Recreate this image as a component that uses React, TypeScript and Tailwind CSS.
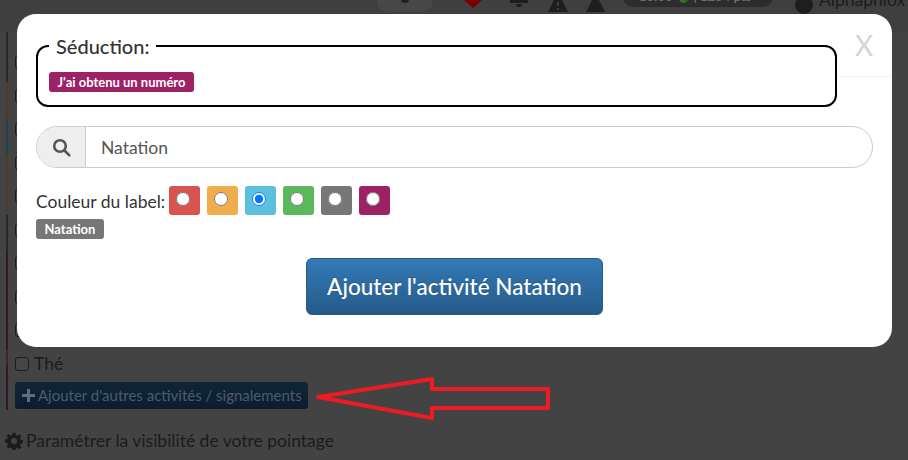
const swatches = [
  { bg: "bg-[#d9534f]", on: false },
  { bg: "bg-[#f0ad4e]", on: false },
  { bg: "bg-[#5bc0de]", on: true },
  { bg: "bg-[#5cb85c]", on: false },
  { bg: "bg-[#777777]", on: false },
  { bg: "bg-[#9c2265]", on: false },
];

const stripes = [
  { h: "h-[50px]", c: "bg-[#262b29]" },
  { h: "h-[36px]", c: "bg-[#4d3d27]" },
  { h: "h-[37px]", c: "bg-[#23424d]" },
  { h: "h-[60px]", c: "bg-[#4d3d27]" },
  { h: "h-[35px]", c: "bg-[#262b29]" },
  { h: "h-[100px]", c: "bg-[#30192a]" },
  { h: "h-[15px]", c: "bg-[#4a2228]" },
  { h: "h-[45px]", c: "bg-[#30192a]" },
];

function Box() {
  return <span className="block w-[14px] h-[14px] shrink-0 rounded-[3px] border border-[#1c1c1c] bg-[#464646]"></span>;
}

export default function App() {
  return (
    <div className="relative w-[908px] h-[460px] overflow-hidden bg-[#434343] font-['Lato',sans-serif] text-[#1b1b1b]">
      {/* top bar, clipped by the top of the window */}
      <header className="h-[32px] bg-[#3f3f3f] overflow-hidden flex items-start pl-[376px]">
        <div className="w-[58px] h-[33px] -mt-[20px] rounded-[12px] bg-[#474747] border border-[#3c3c3c] flex items-end justify-center pb-[9px]">
          <span className="block w-[8px] h-[8px] rounded-full bg-[#1f1f1f]"></span>
        </div>
        <div className="ml-[30px] w-0 h-0 border-x-[9px] border-x-transparent border-t-[8px] border-t-[#7a0000]"></div>
        <div className="ml-[28px] flex flex-col items-center">
          <span className="block w-[18px] h-[3px] bg-[#1e1e1e]"></span>
          <span className="block mt-[1px] w-[6px] h-[3px] rounded-b-full bg-[#1e1e1e]"></span>
        </div>
        <svg className="ml-[20px]" width="20" height="12" viewBox="0 0 20 12" fill="#1e1e1e">
          <path fillRule="evenodd" d="M6 0h8l6 12H0zM9 2v4h2V2zM9 8v2h2V8z" />
        </svg>
        <svg className="ml-[18px]" width="19" height="12" viewBox="0 0 19 12" fill="#1e1e1e">
          <path d="M6 0h7l6 12H0z" />
        </svg>
        <div className="ml-[18px] w-[150px] h-[21px] -mt-[14px] shrink-0 rounded-full bg-[#2c2c2c] flex items-end pb-[3px] pl-[16px] gap-[6px] text-[13px] leading-[15px] font-bold text-[#6c6c6c] whitespace-nowrap">
          <span>13:03</span>
          <span className="block w-[9px] h-[9px] mb-[1px] rounded-full bg-[#3f6b24]"></span>
          <span>| 1254 pts</span>
        </div>
        <span className="ml-[22px] block w-[18px] h-[18px] -mt-[4px] shrink-0 rounded-full bg-[#1e1e1e]"></span>
        <span className="ml-[6px] -mt-[10px] text-[17.500px] leading-[20px] whitespace-nowrap">Alphaphlox</span>
      </header>

      {/* page behind the modal */}
      <main className="flex pl-[6px]">
        <div className="w-[2px] shrink-0 flex flex-col">
          {stripes.map((s, i) => (
            <span key={i} className={`block ${s.h} ${s.c}`}></span>
          ))}
        </div>
        <div className="pl-[7px] pt-[23px] flex flex-col items-start">
          <div className="flex flex-col gap-[19.500px]">
            {Array.from({ length: 9 }).map((_, i) => (
              <Box key={i} />
            ))}
          </div>
          <label className="mt-[16px] flex items-center gap-[5px] text-[17.500px] leading-[22px]">
            <Box />
            Thé
          </label>
          <button className="mt-[7px] w-[293px] h-[27px] rounded-[3px] bg-gradient-to-b from-[#0f2638] to-[#0c1d2d] text-[#4c5c6c] text-[15px] flex items-center pl-[7px] gap-[3px] whitespace-nowrap">
            <svg width="13" height="13" viewBox="0 0 13 13" fill="#5f6e7c">
              <path d="M5 0h3v5h5v3H8v5H5V8H0V5h5z" />
            </svg>
            Ajouter d'autres activités / signalements
          </button>
        </div>
      </main>
      <div className="mt-[20px] pl-[5px] flex items-center gap-[3px] text-[17.500px] leading-[22px] whitespace-nowrap">
        <svg width="18" height="18" viewBox="0 0 24 24" fill="#1b1b1b">
          <path fillRule="evenodd" d="M10 1h4l.6 3.100 1.900.8L19.200 3 22 5.800 20.200 8.500l.8 1.900 3 .6v4l-3.100.6-.8 1.900 1.900 2.700-2.800 2.800-2.700-1.900-1.900.8-.6 3.100h-4l-.6-3.100-1.900-.8L4.800 22 2 19.200l1.800-2.700-.8-1.900-3-.6v-4l3.100-.6.800-1.900L2 5.800 4.800 3l2.700 1.900 1.900-.8zM12 8a4 4 0 1 0 0 8 4 4 0 0 0 0-8z" />
        </svg>
        Paramétrer la visibilité de votre pointage
      </div>

      {/* hand-drawn arrow over the screenshot */}
      <svg className="absolute left-[310px] top-[370px]" width="250" height="55" viewBox="0 0 250 55" fill="none">
        <path d="M8 27 122 9V19H238V38H122V48Z" stroke="#ed1c24" strokeWidth="4" strokeLinejoin="round" />
      </svg>

      {/* modal */}
      <div className="absolute left-[17px] top-[14px] w-[875px] h-[333px] bg-white rounded-[19px] pt-[20px] px-[19px] flex flex-col items-start">
        <div className="absolute right-0 left-[820px] top-[62px] h-px bg-[#f3f3f3]"></div>
        <span className="absolute left-[838px] top-[13px] text-[28px] leading-[36px] text-[#d4d4d4]">X</span>

        <fieldset className="w-[801px] h-[73px] border-2 border-black rounded-[12px] pl-[11px] m-0">
          <legend className="px-[7px] text-[20px] leading-[24px] font-medium text-[#333]">Séduction:</legend>
          <span className="block w-fit mt-[14px] h-[20px] px-[8.500px] rounded-[3px] bg-[#9c2265] text-white text-[13px] font-bold leading-[20px] whitespace-nowrap">
            J'ai obtenu un numéro
          </span>
        </fieldset>

        <div className="mt-[19px] w-[837px] h-[42px] flex rounded-full border border-[#cccccc] overflow-hidden">
          <div className="w-[49px] bg-[#eeeeee] border-r border-[#cccccc] flex items-center justify-center">
            <svg width="19" height="19" viewBox="0 0 19 19" fill="none" stroke="#555" strokeWidth="2.600">
              <circle cx="8" cy="8" r="5.800" />
              <path d="M12.500 12.500 17.300 17.300" strokeLinecap="round" />
            </svg>
          </div>
          <div className="flex-1 pl-[15px] pt-[2px] flex items-center text-[17.500px] text-[#555555]">Natation</div>
        </div>

        <div className="mt-[18px] flex items-center text-[17.500px] text-[#333] gap-[4px] h-[29px]">
          <span className="pt-[3px]">Couleur du label:</span>
          <div className="flex gap-[7px]">
            {swatches.map((s, i) => (
              <div key={i} className={`w-[31px] h-[29px] rounded-[3px] flex justify-center pt-[6px] pr-[3px] ${s.bg}`}>
                <input type="radio" name="couleur" defaultChecked={s.on} className="block m-0 w-[14px] h-[14px]" />
              </div>
            ))}
          </div>
        </div>

        <span className="mt-[4px] h-[20px] px-[8.500px] rounded-[3px] bg-[#777777] text-white text-[13px] font-bold leading-[20px]">
          Natation
        </span>

        <button className="self-center mt-[19px] w-[297px] h-[57px] shrink-0 rounded-[6px] border border-[#2a5a88] bg-gradient-to-b from-[#337ab7] to-[#265a88] text-white text-[22.500px] font-medium flex items-center justify-center whitespace-nowrap [text-shadow:0_-1px_0_rgba(0,0,0,0.2)]">
          Ajouter l'activité Natation
        </button>
      </div>
    </div>
  );
}
